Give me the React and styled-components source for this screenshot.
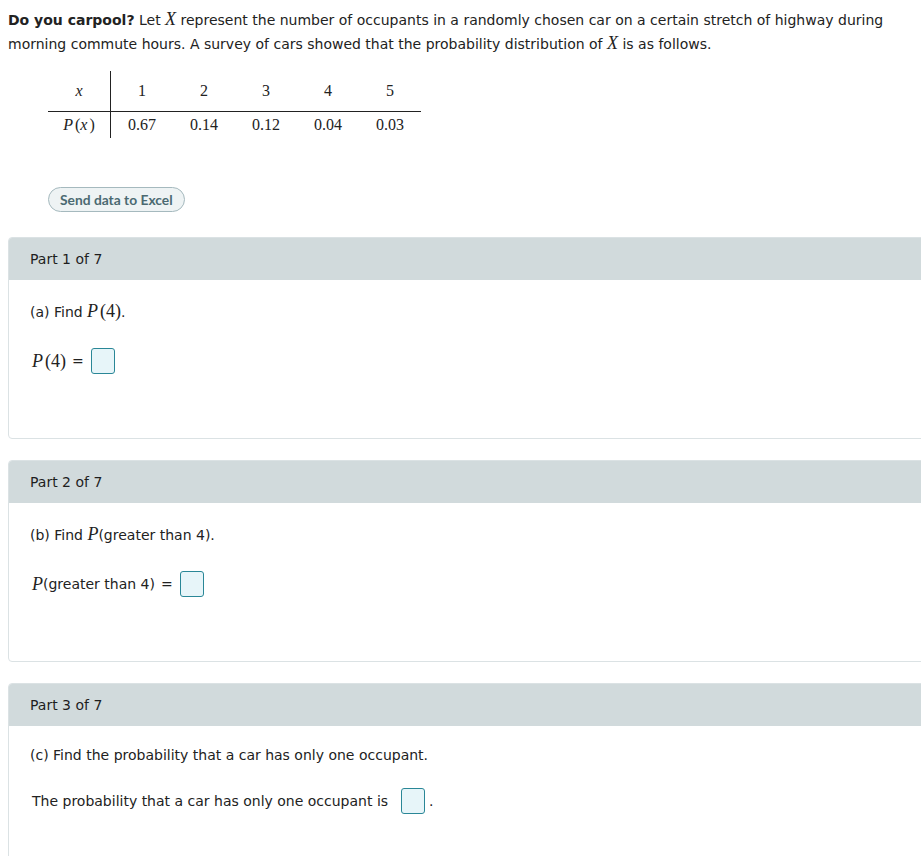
import React from "react";
import styled, { createGlobalStyle } from "styled-components";

const GlobalStyle = createGlobalStyle`
  html {
    overflow: hidden;
  }
  body {
    margin: 8px 0 0 8px;
    background: #ffffff;
    font-family: "DejaVu Sans", Verdana, sans-serif;
    font-size: 14px;
    color: #222;
  }
`;

const probs = [
  { x: 1, p: "0.67" },
  { x: 2, p: "0.14" },
  { x: 3, p: "0.12" },
  { x: 4, p: "0.04" },
  { x: 5, p: "0.03" },
];

const Page = styled.div`
  display: flex;
  flex-direction: column;
  align-items: flex-start;
  padding-right: 8px;
`;

const Intro = styled.p`
  margin: 0;
  line-height: 24px;
  font-size: 14px;
`;

const Math = styled.span`
  font-family: "Liberation Serif", "Times New Roman", serif;
  font-style: ${(p) => (p.italic ? "italic" : "normal")};
  font-size: 18px;
  line-height: 1;
  margin-right: ${(p) => (p.gap ? "2px" : "0")};
`;

const Table = styled.table`
  margin: 15px 0 0 40px;
  border-collapse: collapse;
  table-layout: fixed;
  font-family: "Liberation Serif", "Times New Roman", serif;
  font-size: 16px;
  color: #222;
`;

const Cell = styled.td`
  width: 62px;
  padding: 0;
  text-align: center;
  vertical-align: middle;
  height: ${(p) => (p.head ? "40px" : "26px")};
  border-bottom: ${(p) => (p.head ? "1px solid #222" : "none")};
  border-left: ${(p) => (p.first ? "1px solid #222" : "none")};
  font-style: ${(p) => (p.label ? "italic" : "normal")};
`;

const Upright = styled.span`
  font-style: normal;
  margin-left: 2px;
`;

const ExcelButton = styled.button`
  margin: 49px 0 0 40px;
  height: 25px;
  padding: 0 11px;
  border: 1px solid #a5b9be;
  border-radius: 13px;
  background: #eef3f4;
  color: #4b6a72;
  font-family: Lato, "Open Sans", sans-serif;
  font-weight: 700;
  font-size: 13.8px;
  cursor: pointer;
`;

const Card = styled.section`
  align-self: stretch;
  margin: ${(p) => (p.first ? "25px" : "21px")} -20px 0 0;
  border: 1px solid #dbe2e4;
  border-radius: 4px;
  overflow: hidden;
`;

const CardHeader = styled.div`
  height: 42px;
  display: flex;
  align-items: center;
  padding-left: 21px;
  background: #d1dadc;
  font-size: 14px;
  color: #1e1e1e;
`;

const CardBody = styled.div`
  min-height: 158px;
  box-sizing: border-box;
  padding: ${(p) => (p.compact ? "17px" : "20px")} 21px 0;
  display: flex;
  flex-direction: column;
  gap: ${(p) => (p.compact ? "21px" : "24px")};
`;

const Question = styled.div`
  line-height: 24px;
  font-size: 14px;
`;

const AnswerRow = styled.div`
  display: flex;
  align-items: center;
  padding-left: 2px;
  font-size: 14px;
  line-height: 26px;
`;

const Eq = styled.span`
  margin: 0 7px 0 6px;
`;

const AnswerBox = styled.span`
  display: inline-block;
  width: 22px;
  height: 24px;
  border: 1px solid #2a8797;
  border-radius: 3px;
  background: #e7f5f9;
`;

const Period = styled.span`
  margin-left: 4px;
`;

export default function App() {
  return (
    <Page>
      <GlobalStyle />
      <Intro>
        <b>Do you carpool?</b> Let <Math italic>X</Math> represent the number of occupants in a
        randomly chosen car on a certain stretch of highway during morning commute hours. A
        survey of cars showed that the probability distribution of <Math italic>X</Math> is as
        follows.
      </Intro>

      <Table>
        <tbody>
          <tr>
            <Cell head label>x</Cell>
            {probs.map((d, i) => (
              <Cell head key={d.x} first={i === 0}>
                {d.x}
              </Cell>
            ))}
          </tr>
          <tr>
            <Cell label>
              P<Upright>(</Upright>x<Upright>)</Upright>
            </Cell>
            {probs.map((d, i) => (
              <Cell key={d.x} first={i === 0}>
                {d.p}
              </Cell>
            ))}
          </tr>
        </tbody>
      </Table>

      <ExcelButton>Send data to Excel</ExcelButton>

      <Card first>
        <CardHeader>Part 1 of 7</CardHeader>
        <CardBody>
          <Question>
            (a) Find <Math italic gap>P</Math>
            <Math>(4)</Math>.
          </Question>
          <AnswerRow>
            <Math italic gap>P</Math>
            <Math>(4)</Math>
            <Eq>=</Eq>
            <AnswerBox />
          </AnswerRow>
        </CardBody>
      </Card>

      <Card>
        <CardHeader>Part 2 of 7</CardHeader>
        <CardBody>
          <Question>
            (b) Find <Math italic>P</Math>(greater than 4).
          </Question>
          <AnswerRow>
            <Math italic>P</Math>(greater than 4)
            <Eq>=</Eq>
            <AnswerBox />
          </AnswerRow>
        </CardBody>
      </Card>

      <Card>
        <CardHeader>Part 3 of 7</CardHeader>
        <CardBody compact>
          <Question>(c) Find the probability that a car has only one occupant.</Question>
          <AnswerRow>
            The probability that a car has only one occupant is
            <Eq />
            <AnswerBox />
            <Period>.</Period>
          </AnswerRow>
        </CardBody>
      </Card>
    </Page>
  );
}
